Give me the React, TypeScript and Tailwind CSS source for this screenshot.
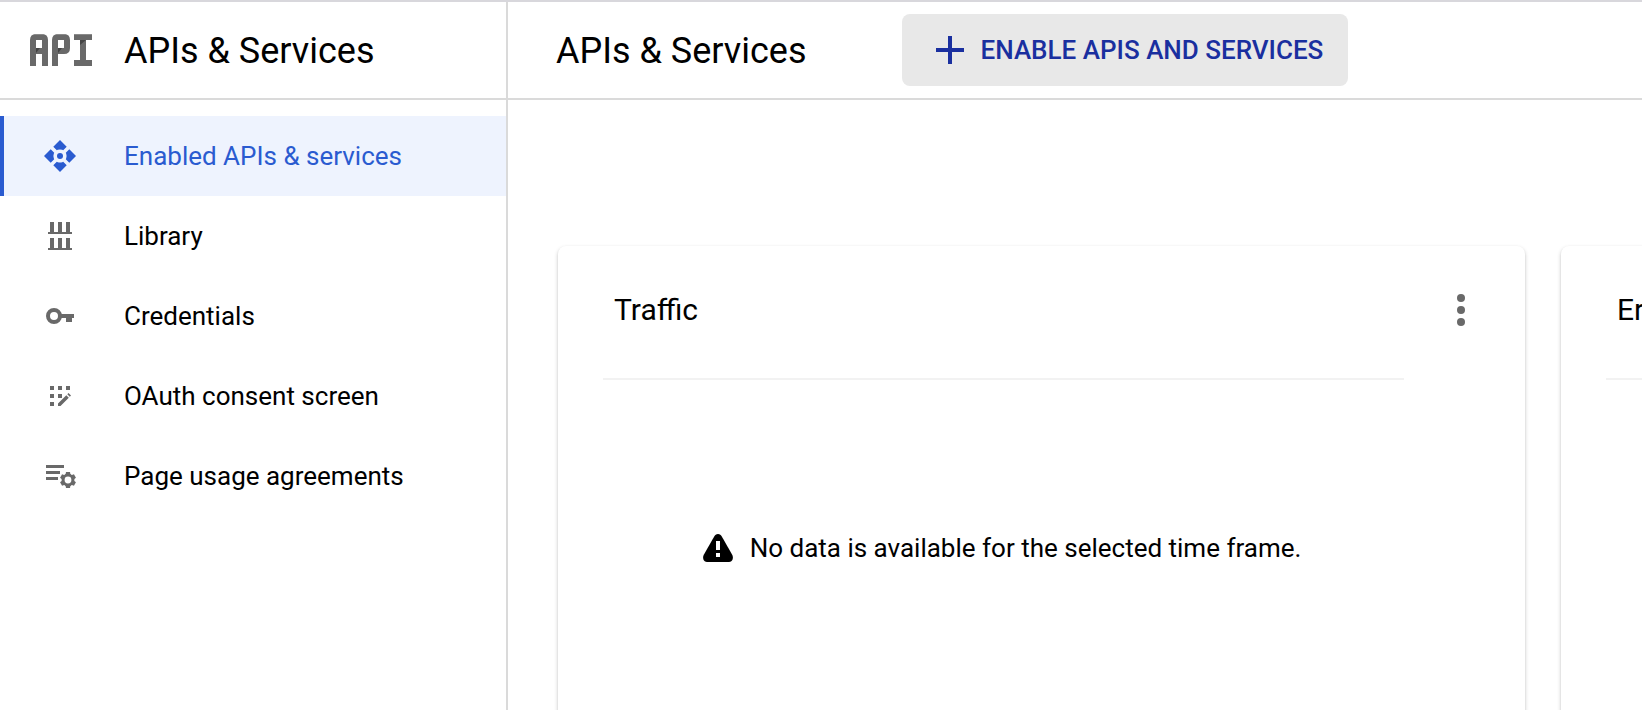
import type { ReactNode } from "react";

const ApiLogo = () => (
  <svg width="62" height="32" viewBox="0 0 62 32" className="shrink-0" aria-hidden="true">
    <g fill="#696969" fillRule="evenodd">
      <path d="M0 32V6Q0 0 6 0h6q6 0 6 6v26h-6V20H6v12zM6 6v8h6V6z" />
      <path d="M22 32V6q0-6 6-6h6q6 0 6 6v8q0 6-6 6h-6v12zM28 6v8h6V6z" />
      <path d="M44 0h18v6h-6v20h6v6H44v-6h6V6h-6z" />
    </g>
    <path fill="#444" d="M6 14h4l-4 5zM28 14h4l-4 5zM50 6h6l-6 5z" />
    <path fill="#8a8a8a" d="M5 0h8l1 1H4zM27 0h8l1 1H26zM44 0h18v1H44z" />
  </svg>
);

const NavIcon = ({ children }: { children: ReactNode }) => (
  <svg
    width="36"
    height="36"
    viewBox="0 0 36 36"
    fill="currentColor"
    className="shrink-0"
    aria-hidden="true"
  >
    {children}
  </svg>
);

const API_ARROW = "M18 2l6.7 6.7-3.5 3.5-1-.4a6.400 6.400 0 0 0-4.400 0l-1 .4-3.500-3.500z";

const navItems = [
  {
    label: "Enabled APIs & services",
    active: true,
    icon: (
      <>
        {[0, 90, 180, 270].map((angle) => (
          <path key={angle} d={API_ARROW} transform={`rotate(${angle} 18 18)`} />
        ))}
        <circle cx="18" cy="18" r="3" />
      </>
    ),
  },
  {
    label: "Library",
    icon: (
      <path d="M8 4h4v10h4V4h4v10h4V4h4v10h2v2H6v-2h2zM8 20h4v10h4V20h4v10h4V20h4v10h2v2H6v-2h2z" />
    ),
  },
  {
    label: "Credentials",
    icon: (
      <>
        <circle cx="12" cy="18" r="6" fill="none" stroke="currentColor" strokeWidth="4" />
        <path d="M19 16h13v4h-2v4h-6v-4h-5z" />
      </>
    ),
  },
  {
    label: "OAuth consent screen",
    icon: (
      <path d="M8 8h4v4H8zM16 8h4v4h-4zM24 8h4v4h-4zM8 16h4v4H8zM16 16h4v4h-4zM8 24h4v4H8zM16 28v-2.500l8.300-8.300 2.500 2.500-8.300 8.300zM25.300 16.200l1.200-1.200 2.500 2.500-1.200 1.200z" />
    ),
  },
  {
    label: "Page usage agreements",
    icon: (
      <>
        <path d="M4 7h18v3H4zM4 13h14v3H4zM4 19h12v3H4z" />
        <circle cx="26" cy="22" r="4.900" fill="none" stroke="currentColor" strokeWidth="3" />
        {[0, 60, 120, 180, 240, 300].map((angle) => (
          <path key={angle} d="M24 14h4l.6 3.600h-5.200z" transform={`rotate(${angle} 26 22)`} />
        ))}
      </>
    ),
  },
];

const Sidebar = () => {
  return (
    <aside className="flex w-[508px] shrink-0 flex-col border-r-2 border-[#dadada]">
      <div className="flex h-[98px] shrink-0 items-center gap-8 border-b-2 border-[#dadada] pl-[30px]">
        <ApiLogo />
        <h2 className="pt-0.5 text-[36px] leading-[48px]">APIs &amp; Services</h2>
      </div>
      <nav className="flex flex-col pt-4">
        {navItems.map(({ label, icon, active }) => (
          <a
            key={label}
            href="#"
            aria-current={active ? "page" : undefined}
            className={
              active
                ? "flex h-20 items-center gap-[46px] border-l-4 border-[#2a5bd0] bg-[#eef3fe] pl-[38px] text-[#2a5bd0]"
                : "flex h-20 items-center gap-[46px] border-l-4 border-transparent pl-[38px] text-[#696969]"
            }
          >
            <NavIcon>{icon}</NavIcon>
            <span className={active ? "text-[26px]" : "text-[26px] text-black"}>{label}</span>
          </a>
        ))}
      </nav>
    </aside>
  );
};

const NoData = () => (
  <>
    <svg width="32" height="32" viewBox="0 0 32 32" className="shrink-0" aria-hidden="true">
      <path d="M16 2c1.800 0 3 1 3.800 2.400l10.400 18.400c1.600 3 .4 7.200-3.200 7.200H5c-3.600 0-4.800-4.200-3.200-7.200L12.200 4.400C13 3 14.200 2 16 2z" />
      <path fill="#fff" d="M14 9h4v9h-4zM14 21h4v4h-4z" />
    </svg>
    <p className="text-[26px] leading-9 whitespace-nowrap">
      No data is available for the selected time frame.
    </p>
  </>
);

const MetricCard = ({ title, children }: { title: string; children?: ReactNode }) => {
  return (
    <section className="w-[calc(100%-117px)] shrink-0 rounded-lg bg-white pb-12 shadow-[0_2px_4px_rgba(0,0,0,0.2),0_1px_2px_rgba(0,0,0,0.08)]">
      <div className="flex h-[132px] items-center justify-between pr-[46px] pb-1 pl-14">
        <h3 className="text-[30px] leading-10">{title}</h3>
        <button type="button" aria-label={`${title} options`} className="p-0 text-[#696969]">
          <svg width="36" height="36" viewBox="0 0 36 36" fill="currentColor" aria-hidden="true">
            <circle cx="18" cy="6" r="4" />
            <circle cx="18" cy="18" r="4" />
            <circle cx="18" cy="30" r="4" />
          </svg>
        </button>
      </div>
      <div className="mr-[121px] ml-[45px] flex h-[338px] items-center justify-center gap-4 border-t-2 border-[#f2f2f2] pr-1">
        {children}
      </div>
    </section>
  );
};

const App = () => {
  return (
    <div className="flex h-screen overflow-hidden border-t-2 border-[#d8d7dc] bg-white font-[Roboto,sans-serif] text-black">
      <Sidebar />
      <main className="flex min-w-0 flex-1 flex-col">
        <header className="flex h-[98px] shrink-0 items-center gap-[95px] border-b-2 border-[#dadada] pl-12">
          <h1 className="pt-0.5 text-[36px] leading-[48px]">APIs &amp; Services</h1>
          <button
            type="button"
            className="flex h-[72px] items-center gap-[17px] rounded-lg bg-[#e8e8e8] pr-[25px] pl-[34px] text-[26px] font-medium whitespace-nowrap text-[#1a2f9f]"
          >
            <svg width="28" height="28" viewBox="0 0 28 28" fill="currentColor" aria-hidden="true">
              <path d="M12 0h4v12h12v4H16v12h-4V16H0v-4h12z" />
            </svg>
            ENABLE APIS AND SERVICES
          </button>
        </header>

        {/* Metric cards */}
        <div className="flex shrink-0 gap-9 overflow-hidden pt-[146px] pl-[50px]">
          <MetricCard title="Traffic">
            <NoData />
          </MetricCard>
          <MetricCard title="Errors" />
        </div>
      </main>
    </div>
  );
};

export default App;
